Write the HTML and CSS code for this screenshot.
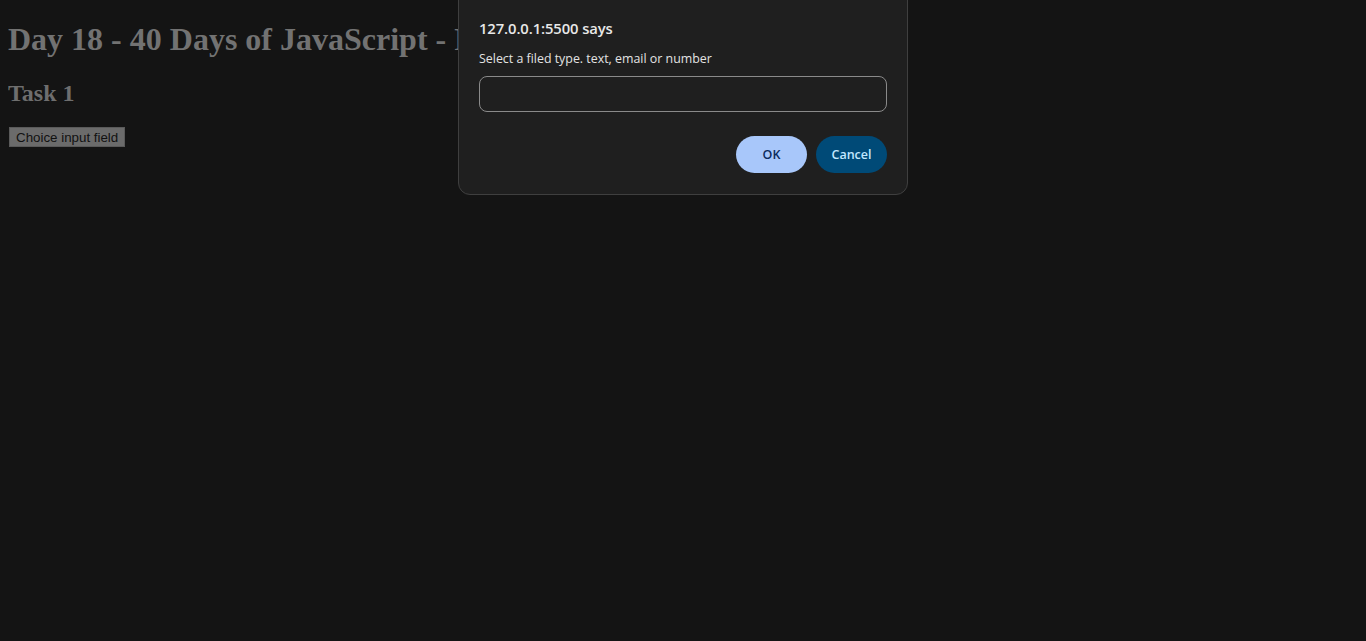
FILE: index.html
```html
<!DOCTYPE html>
<html>
<head>
<meta charset="utf-8">
<title>Day 18</title>
<link rel="stylesheet" href="styles.css">
</head>
<body>
<main class="page">
  <h1 class="title">Day 18 - 40 Days of JavaScript - Forms</h1>
  <h2 class="task">Task 1</h2>
  <button class="choice">Choice input field</button>
</main>
<div class="dialog" role="dialog">
  <div class="dlg-title">127.0.0.1:5500 says</div>
  <div class="dlg-msg">Select a filed type. text, email or number</div>
  <div class="dlg-input"></div>
  <div class="dlg-actions">
    <button class="btn btn-ok">OK</button>
    <button class="btn btn-cancel">Cancel</button>
  </div>
</div>
</body>
</html>
```
FILE: styles.css
```css
html {
  background: #141414;
  overflow: hidden;
}
body {
  margin: 8px;
  font-family: "Liberation Serif", serif;
  color: #6f6f6f;
}
.page {
  display: flow-root;
}
.title {
  font-size: 32px;
  margin: 13px 0 22px;
  color: #727272;
  white-space: nowrap;
}
.task {
  font-size: 24px;
  margin: 20px 0 20px;
  color: #6e6e6e;
}
.choice {
  font-family: "Liberation Sans", sans-serif;
  font-size: 13.33px;
  background: #6b6b6b;
  color: #111;
  border: 1px solid #5a5a5a;
  padding: 1px 6px;
  margin: 0 0 0 1px;
  height: 20px;
}
.dialog {
  position: absolute;
  left: 458px;
  top: -12px;
  width: 450px;
  box-sizing: border-box;
  background: #1f1f1f;
  border: 1px solid #3f3f3f;
  border-radius: 12px;
  padding: 29px 20px 21px 20px;
  font-family: "Open Sans", "Noto Sans", sans-serif;
  display: flex;
  flex-direction: column;
}
.dlg-title {
  font-size: 14.8px;
  font-weight: 600;
  color: #e8e8e8;
  line-height: 20px;
  letter-spacing: -0.1px;
}
.dlg-msg {
  font-size: 12.4px;
  color: #e3e3e3;
  margin-top: 12px;
  line-height: 17px;
}
.dlg-input {
  margin-top: 9px;
  height: 36px;
  box-sizing: border-box;
  border: 1px solid #8a8a8a;
  border-radius: 8px;
}
.dlg-actions {
  display: flex;
  justify-content: flex-end;
  gap: 9px;
  margin-top: 24px;
}
.btn {
  width: 71px;
  height: 37px;
  border: none;
  border-radius: 19px;
  font-family: "Open Sans", "Noto Sans", sans-serif;
  font-size: 12.5px;
  font-weight: 600;
  padding: 0;
}
.btn-ok {
  background: #a8c7fa;
  color: #0b2c5e;
}
.btn-cancel {
  background: #004a77;
  color: #c2e7ff;
}
```
